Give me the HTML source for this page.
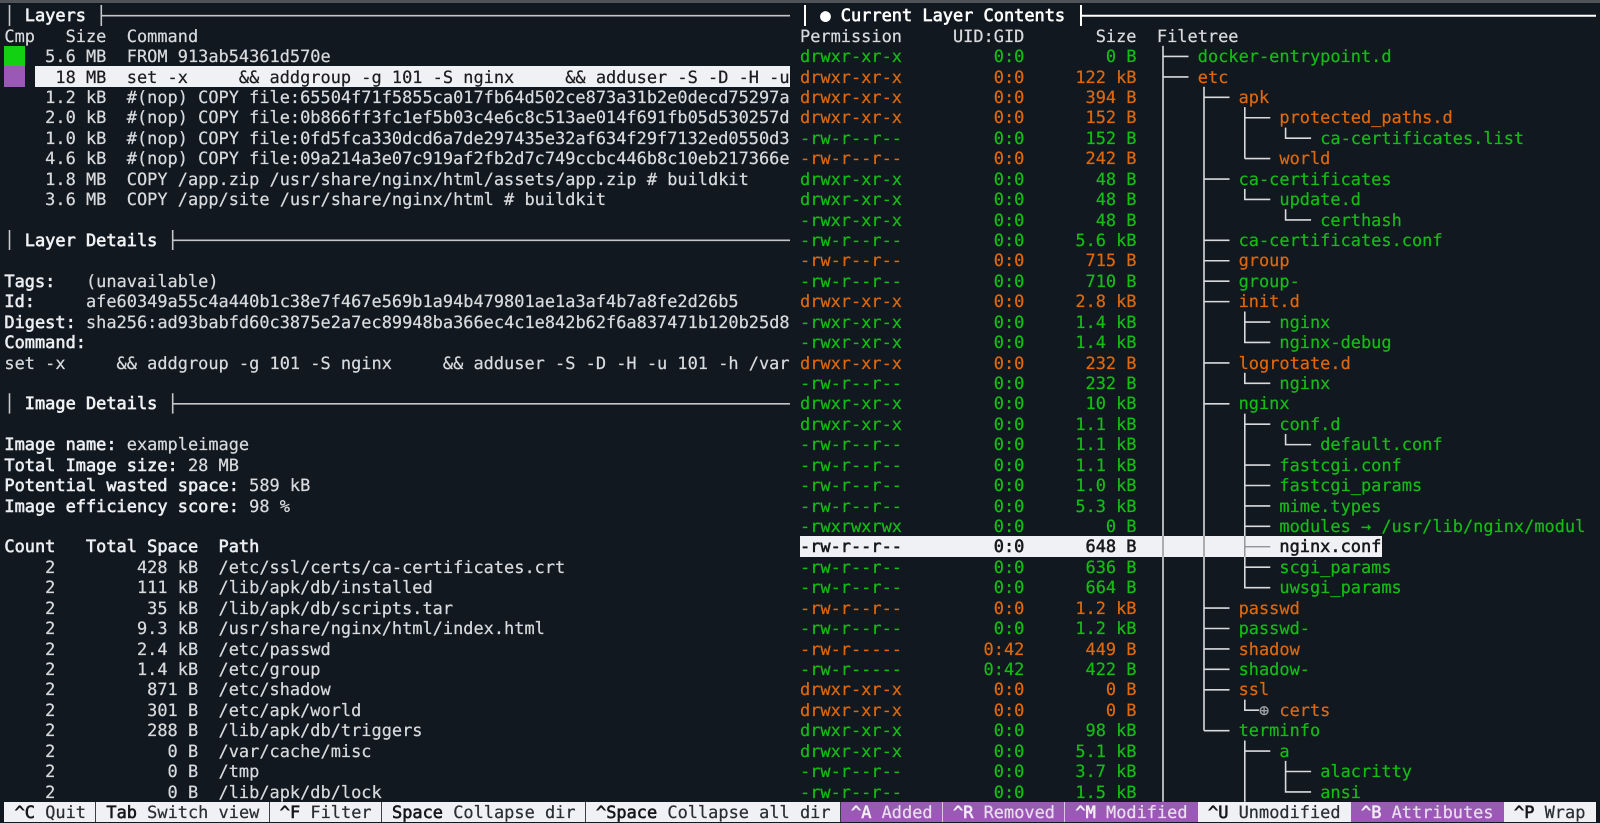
<!DOCTYPE html>
<html><head><meta charset="utf-8"><title>dive</title>
<style>
html,body{margin:0;padding:0;background:#111820;width:1600px;height:823px;overflow:hidden}
body{position:relative;font-family:"DejaVu Sans Mono","Liberation Mono",monospace;font-size:16.94px;color:#d8dadd;text-rendering:geometricPrecision;-webkit-text-stroke:.22px currentColor}
.r{position:absolute;left:4.4px;top:calc(5.3px + var(--i)*20.43px);height:20.43px;line-height:20.43px;white-space:pre}
.q{left:800px}
.g{color:#14bc14}.o{color:#de680c}
.r b{color:#eceef1;font-weight:normal;-webkit-text-stroke:.6px currentColor}
.r i{position:absolute;top:0;font-style:normal}
.a{left:397.8px}.b{left:438.6px}.c{left:479.4px}.d{left:520.2px}
.t{color:#f0f2f4;-webkit-text-stroke:.65px currentColor}
.bg{position:absolute}
.s{position:absolute;top:802px;height:20px;line-height:20px;white-space:pre;background:#eff1f5;color:#2a2d31;box-sizing:border-box;border-right:1px solid #3a3f45}
.s b{color:#15171a;font-weight:normal;-webkit-text-stroke:.6px currentColor}
.p{background:#9b59b6;color:#e9dcef;border-right:1px solid #d9c9e2}
.p b{color:#f3ecf6}
svg{position:absolute;left:0;top:0}
</style></head><body>
<div class="bg" style="left:0;top:0;width:1600px;height:2.5px;background:#505357"></div>
<div class="bg" style="left:4.4px;top:45.86px;width:20.4px;height:20.43px;background:#12d012"></div>
<div class="bg" style="left:4.4px;top:66.29px;width:20.4px;height:20.43px;background:#9b59b6"></div>
<div class="bg" style="left:35px;top:66.29px;width:755px;height:20.43px;background:#eff1f5"></div>
<div class="bg" style="left:800px;top:536.18px;width:581.5px;height:20.43px;background:#eff1f5"></div>
<svg width="1600" height="823" fill="none">
<g stroke="#c4c6ca" stroke-width="1.6">
<path d="M9.5 5V26M101.3 5V26M101.3 15.7H790M9.5 230V250M172.7 230V250M172.7 240.3H790M9.5 393.2V413.6M172.7 393.2V413.6M172.7 403.8H790"/>
</g>
<g stroke="#ffffff" stroke-width="2">
<path d="M805 5V26M1081 5V26M1081 15.7H1596"/>
</g>
<g stroke="#d8dade" stroke-width="1.6">
<path d="M1163 45.86V801.77M1163 56.46H1188.5M1163 76.89H1188.5"/>
<path d="M1204 86.72V730.65M1204 97.32H1229.5M1204 179.04H1229.5M1204 240.33H1229.5M1204 260.76H1229.5M1204 281.19H1229.5M1204 301.62H1229.5M1204 362.91H1229.5M1204 403.77H1229.5M1204 608.07H1229.5M1204 628.5H1229.5M1204 648.93H1229.5M1204 669.36H1229.5M1204 689.79H1229.5M1204 730.65H1229.5"/>
<path d="M1244.8 107.15V158.61M1244.8 117.75H1270.3M1244.8 158.61H1270.3"/>
<path d="M1244.8 188.87V199.47H1270.3"/>
<path d="M1244.8 311.45V342.48H1270.3M1244.8 322.05H1270.3"/>
<path d="M1244.8 372.74V383.34H1270.3"/>
<path d="M1244.8 413.6V587.64H1270.3M1244.8 424.2H1270.3M1244.8 465.06H1270.3M1244.8 485.49H1270.3M1244.8 505.92H1270.3M1244.8 526.35H1270.3M1244.8 567.21H1270.3"/>
<path d="M1244.8 699.62V710.22H1259"/>
<path d="M1244.8 740.48V801.77M1244.8 751.08H1270.3"/>
<path d="M1285.6 127.58V138.18H1311.1"/>
<path d="M1285.6 209.3V219.9H1311.1"/>
<path d="M1285.6 434.03V444.63H1311.1"/>
<path d="M1285.6 760.91V791.94H1311.1M1285.6 771.51H1311.1"/>
</g>
<g stroke="#85888c" stroke-width="1.2">
<path d="M1163 536.18V556.61M1204 536.18V556.61M1244.8 536.18V556.61M1244.8 546.78H1270.3"/>
</g>
</svg>

<div class="r t" style="--i:0">  Layers</div>
<div class="r" style="--i:1">Cmp   Size  Command</div>
<div class="r" style="--i:2">    5.6 MB  FROM 913ab54361d570e</div>
<div class="r" style="--i:3;color:#1a1c20">     18 MB  set -x     &amp;&amp; addgroup -g 101 -S nginx     &amp;&amp; adduser -S -D -H -u</div>
<div class="r" style="--i:4">    1.2 kB  #(nop) COPY file:65504f71f5855ca017fb64d502ce873a31b2e0decd75297a</div>
<div class="r" style="--i:5">    2.0 kB  #(nop) COPY file:0b866ff3fc1ef5b03c4e6c8c513ae014f691fb05d530257d</div>
<div class="r" style="--i:6">    1.0 kB  #(nop) COPY file:0fd5fca330dcd6a7de297435e32af634f29f7132ed0550d3</div>
<div class="r" style="--i:7">    4.6 kB  #(nop) COPY file:09a214a3e07c919af2fb2d7c749ccbc446b8c10eb217366e</div>
<div class="r" style="--i:8">    1.8 MB  COPY /app.zip /usr/share/nginx/html/assets/app.zip # buildkit</div>
<div class="r" style="--i:9">    3.6 MB  COPY /app/site /usr/share/nginx/html # buildkit</div>
<div class="r t" style="--i:11">  Layer Details</div>
<div class="r" style="--i:13"><b>Tags:</b>   (unavailable)</div>
<div class="r" style="--i:14"><b>Id:</b>     afe60349a55c4a440b1c38e7f467e569b1a94b479801ae1a3af4b7a8fe2d26b5</div>
<div class="r" style="--i:15"><b>Digest:</b> sha256:ad93babfd60c3875e2a7ec89948ba366ec4c1e842b62f6a837471b120b25d8</div>
<div class="r" style="--i:16"><b>Command:</b></div>
<div class="r" style="--i:17">set -x     &amp;&amp; addgroup -g 101 -S nginx     &amp;&amp; adduser -S -D -H -u 101 -h /var</div>
<div class="r t" style="--i:19">  Image Details</div>
<div class="r" style="--i:21"><b>Image name:</b> exampleimage</div>
<div class="r" style="--i:22"><b>Total Image size:</b> 28 MB</div>
<div class="r" style="--i:23"><b>Potential wasted space:</b> 589 kB</div>
<div class="r" style="--i:24"><b>Image efficiency score:</b> 98 %</div>
<div class="r" style="--i:26"><b>Count   Total Space  Path</b></div>
<div class="r" style="--i:27">    2        428 kB  /etc/ssl/certs/ca-certificates.crt</div>
<div class="r" style="--i:28">    2        111 kB  /lib/apk/db/installed</div>
<div class="r" style="--i:29">    2         35 kB  /lib/apk/db/scripts.tar</div>
<div class="r" style="--i:30">    2        9.3 kB  /usr/share/nginx/html/index.html</div>
<div class="r" style="--i:31">    2        2.4 kB  /etc/passwd</div>
<div class="r" style="--i:32">    2        1.4 kB  /etc/group</div>
<div class="r" style="--i:33">    2         871 B  /etc/shadow</div>
<div class="r" style="--i:34">    2         301 B  /etc/apk/world</div>
<div class="r" style="--i:35">    2         288 B  /lib/apk/db/triggers</div>
<div class="r" style="--i:36">    2           0 B  /var/cache/misc</div>
<div class="r" style="--i:37">    2           0 B  /tmp</div>
<div class="r" style="--i:38">    2           0 B  /lib/apk/db/lock</div>

<div class="r q t" style="--i:0;color:#fff">  ● Current Layer Contents</div>
<div class="r q" style="--i:1">Permission     UID:GID       Size  Filetree</div>
<div class="r q g" style="--i:2">drwxr-xr-x         0:0        0 B<i class="a">docker-entrypoint.d</i></div>
<div class="r q o" style="--i:3">drwxr-xr-x         0:0     122 kB<i class="a">etc</i></div>
<div class="r q o" style="--i:4">drwxr-xr-x         0:0      394 B<i class="b">apk</i></div>
<div class="r q o" style="--i:5">drwxr-xr-x         0:0      152 B<i class="c">protected_paths.d</i></div>
<div class="r q g" style="--i:6">-rw-r--r--         0:0      152 B<i class="d">ca-certificates.list</i></div>
<div class="r q o" style="--i:7">-rw-r--r--         0:0      242 B<i class="c">world</i></div>
<div class="r q g" style="--i:8">drwxr-xr-x         0:0       48 B<i class="b">ca-certificates</i></div>
<div class="r q g" style="--i:9">drwxr-xr-x         0:0       48 B<i class="c">update.d</i></div>
<div class="r q g" style="--i:10">-rwxr-xr-x         0:0       48 B<i class="d">certhash</i></div>
<div class="r q g" style="--i:11">-rw-r--r--         0:0     5.6 kB<i class="b">ca-certificates.conf</i></div>
<div class="r q o" style="--i:12">-rw-r--r--         0:0      715 B<i class="b">group</i></div>
<div class="r q g" style="--i:13">-rw-r--r--         0:0      710 B<i class="b">group-</i></div>
<div class="r q o" style="--i:14">drwxr-xr-x         0:0     2.8 kB<i class="b">init.d</i></div>
<div class="r q g" style="--i:15">-rwxr-xr-x         0:0     1.4 kB<i class="c">nginx</i></div>
<div class="r q g" style="--i:16">-rwxr-xr-x         0:0     1.4 kB<i class="c">nginx-debug</i></div>
<div class="r q o" style="--i:17">drwxr-xr-x         0:0      232 B<i class="b">logrotate.d</i></div>
<div class="r q g" style="--i:18">-rw-r--r--         0:0      232 B<i class="c">nginx</i></div>
<div class="r q g" style="--i:19">drwxr-xr-x         0:0      10 kB<i class="b">nginx</i></div>
<div class="r q g" style="--i:20">drwxr-xr-x         0:0     1.1 kB<i class="c">conf.d</i></div>
<div class="r q g" style="--i:21">-rw-r--r--         0:0     1.1 kB<i class="d">default.conf</i></div>
<div class="r q g" style="--i:22">-rw-r--r--         0:0     1.1 kB<i class="c">fastcgi.conf</i></div>
<div class="r q g" style="--i:23">-rw-r--r--         0:0     1.0 kB<i class="c">fastcgi_params</i></div>
<div class="r q g" style="--i:24">-rw-r--r--         0:0     5.3 kB<i class="c">mime.types</i></div>
<div class="r q g" style="--i:25">-rwxrwxrwx         0:0        0 B<i class="c">modules → /usr/lib/nginx/modul</i></div>
<div class="r q" style="--i:26;color:#17191c;-webkit-text-stroke:.55px currentColor">-rw-r--r--         0:0      648 B<i class="c">nginx.conf</i></div>
<div class="r q g" style="--i:27">-rw-r--r--         0:0      636 B<i class="c">scgi_params</i></div>
<div class="r q g" style="--i:28">-rw-r--r--         0:0      664 B<i class="c">uwsgi_params</i></div>
<div class="r q o" style="--i:29">-rw-r--r--         0:0     1.2 kB<i class="b">passwd</i></div>
<div class="r q g" style="--i:30">-rw-r--r--         0:0     1.2 kB<i class="b">passwd-</i></div>
<div class="r q o" style="--i:31">-rw-r-----        0:42      449 B<i class="b">shadow</i></div>
<div class="r q g" style="--i:32">-rw-r-----        0:42      422 B<i class="b">shadow-</i></div>
<div class="r q o" style="--i:33">drwxr-xr-x         0:0        0 B<i class="b">ssl</i></div>
<div class="r q o" style="--i:34">drwxr-xr-x         0:0        0 B<i style="left:459px;color:#a0a3a7">⊕</i><i class="c">certs</i></div>
<div class="r q g" style="--i:35">drwxr-xr-x         0:0      98 kB<i class="b">terminfo</i></div>
<div class="r q g" style="--i:36">drwxr-xr-x         0:0     5.1 kB<i class="c">a</i></div>
<div class="r q g" style="--i:37">-rw-r--r--         0:0     3.7 kB<i class="d">alacritty</i></div>
<div class="r q g" style="--i:38">-rw-r--r--         0:0     1.5 kB<i class="d">ansi</i></div>

<div class="s" style="left:4.4px;width:91.8px"> <b>^C</b> Quit</div>
<div class="s" style="left:96.2px;width:173.4px"> <b>Tab</b> Switch view</div>
<div class="s" style="left:269.6px;width:112.2px"> <b>^F</b> Filter</div>
<div class="s" style="left:381.8px;width:204px"> <b>Space</b> Collapse dir</div>
<div class="s" style="left:585.8px;width:255px"> <b>^Space</b> Collapse all dir</div>
<div class="s p" style="left:840.8px;width:102px"> <b>^A</b> Added</div>
<div class="s p" style="left:942.8px;width:122.4px"> <b>^R</b> Removed</div>
<div class="s p" style="left:1065.2px;width:132.6px;border-right:0"> <b>^M</b> Modified</div>
<div class="s" style="left:1197.8px;width:153px;border-right:0"> <b>^U</b> Unmodified</div>
<div class="s p" style="left:1350.8px;width:153px;border-right:0"> <b>^B</b> Attributes</div>
<div class="s" style="left:1503.8px;width:92px;border-right:0"> <b>^P</b> Wrap</div>
</body></html>
